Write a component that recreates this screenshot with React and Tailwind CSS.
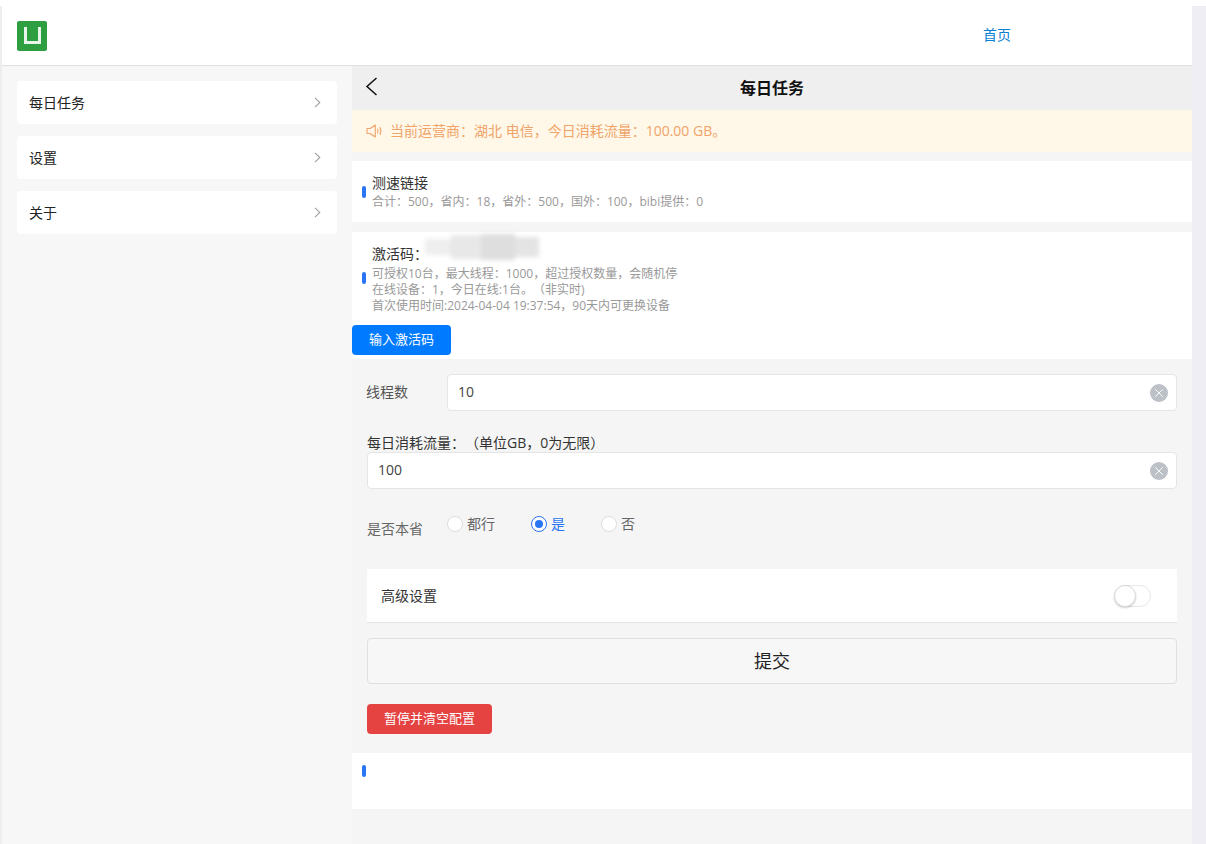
import React from "react";
import { X } from "lucide-react";

function Bar() {
  return <span className="w-1 h-3 rounded-sm bg-[#2a75f3] shrink-0" />;
}

function SideItem({ label }) {
  return (
    <div className="h-[43px] bg-white rounded-sm flex items-center justify-between pl-3 pr-[16px] text-[14px] text-[#222]">
      <span>{label}</span>
      <svg width="7" height="11" viewBox="0 0 7 11" fill="none" stroke="#a0a0a6" strokeWidth="1.1">
        <path d="M1 .8 5.8 5.5 1 10.2" />
      </svg>
    </div>
  );
}

function ClearIcon() {
  return (
    <span className="w-[18px] h-[18px] rounded-full bg-[#bcc0c7] flex items-center justify-center">
      <X className="w-[14px] h-[14px] text-white" strokeWidth={1.6} />
    </span>
  );
}

function Radio({ label, on, cls }) {
  return (
    <div className={"flex items-center gap-1 " + cls}>
      {on ? (
        <span className="w-4 h-4 rounded-full border border-[#2a75f3] bg-white flex items-center justify-center">
          <span className="w-2 h-2 rounded-full bg-[#2a75f3]" />
        </span>
      ) : (
        <span className="w-4 h-4 rounded-full border border-[#ddd] bg-white" />
      )}
      <span className={on ? "text-[#2a75f3] pb-[2px]" : "text-[#666] pb-[2px]"}>{label}</span>
    </div>
  );
}

export default function App() {
  return (
    <div className="w-[1206px] h-[844px] overflow-hidden bg-white flex flex-col [text-spacing-trim:space-all] font-['Open_Sans','Noto_Sans_CJK_SC',sans-serif]">
      <div className="h-[6px] shrink-0 bg-white" />
      <div className="flex flex-1 min-h-0">
        <div className="w-[2px] bg-[#eeeeee] shrink-0" />
        <div className="w-[1190px] flex flex-col shrink-0">
          <header className="h-[60px] shrink-0 bg-white border-b border-[#dfdfdf] flex items-center pl-[15px]">
            <div className="w-[30px] h-[30px] rounded-[2px] bg-[#2d9f40] flex items-center justify-center">
              <span className="w-[17px] h-[17px] border-x-[3px] border-b-[3px] border-[#e8f5ea] block" />
            </div>
            <span className="ml-[936px] text-[14px] text-[#0a7fd6] pb-[2px]">首页</span>
          </header>
          <div className="flex flex-1 min-h-0">
            <aside className="w-[350px] shrink-0 bg-[#f7f7f7] pt-[15px] pl-[15px] pr-[15px] flex flex-col gap-3">
              <SideItem label="每日任务" />
              <SideItem label="设置" />
              <SideItem label="关于" />
            </aside>
            <main className="flex-1 bg-[#f5f5f5] flex flex-col">
              <div className="h-[44px] bg-[#efefef] flex items-center relative shrink-0">
                <svg className="absolute left-[13px] top-[11px]" width="13" height="19" viewBox="0 0 13 19" fill="none" stroke="#111" strokeWidth="1.5">
                  <path d="M11.5 1 2 9.5l9.5 8.5" />
                </svg>
                <span className="w-full text-center text-[16px] font-bold text-[#111]">每日任务</span>
              </div>
              <div className="h-[42px] bg-[#fff7e8] flex items-center pl-[14px] gap-[7px] text-[14px] text-[#f0a469] shrink-0">
                <svg width="17" height="14" viewBox="0 0 17 14" fill="none" stroke="#f0a469" strokeWidth="1.1" strokeLinejoin="round" strokeLinecap="round">
                  <path d="M1 4.5h3.2L9.3 1v12L4.2 9.5H1z" />
                  <path d="M11.5 5c.6 1.2.6 2.8 0 4" />
                  <path d="M14 3.5c1.1 2.2 1.1 4.8 0 7" />
                </svg>
                <span className="pb-[2px]">当前运营商：湖北 电信，今日消耗流量：100.00 GB。</span>
              </div>
              <div className="mt-[9px] h-[61px] bg-white flex items-center pl-[10px] gap-[6px] shrink-0">
                <Bar />
                <div className="flex flex-col pt-[2px]">
                  <span className="text-[14px] leading-[18px] text-[#333]">测速链接</span>
                  <span className="text-[12px] leading-[20px] text-[#999]">合计：500，省内：18，省外：500，国外：100，bibi提供：0</span>
                </div>
              </div>
              <div className="mt-[10px] h-[127px] bg-white flex flex-col shrink-0">
                <div className="flex items-center pl-[10px] gap-[6px] pt-[10px]">
                  <Bar />
                  <div className="flex flex-col">
                    <div className="h-[24px] pb-[2px] flex items-center text-[14px] text-[#333]">
                      <span>激活码：</span>
                      <div className="flex items-center blur-[2px] -mt-[12px] -ml-[3px]">
                        <span className="w-[26px] h-[16px] bg-[#eeeeee]" />
                        <span className="w-[30px] h-[24px] bg-[#e8e8e8]" />
                        <span className="w-[34px] h-[26px] bg-[#dedede]" />
                        <span className="w-[24px] h-[20px] bg-[#e4e4e4]" />
                      </div>
                    </div>
                    <span className="text-[12px] leading-4 text-[#999]">可授权10台，最大线程：1000，超过授权数量，会随机停</span>
                    <span className="text-[12px] leading-4 text-[#999]">在线设备：1，今日在线:1台。（非实时)</span>
                    <span className="text-[12px] leading-4 text-[#999]">首次使用时间:2024-04-04 19:37:54，90天内可更换设备</span>
                  </div>
                </div>
                <button className="mt-[11px] w-[99px] h-[30px] rounded-[4px] bg-[#007bff] text-white text-[13px]">输入激活码</button>
              </div>
              <div className="pl-[15px] pr-[15px] flex flex-col">
                <div className="mt-[15px] flex items-center h-[37px]">
                  <span className="w-[80px] -ml-px mr-px text-[14px] text-[#555] shrink-0 pb-[2px]">线程数</span>
                  <div className="flex-1 h-[37px] bg-white border border-[#e5e5e5] rounded-[4px] flex items-center justify-between pl-[10px] pr-[8px] text-[14px] text-[#444]">
                    <span className="pb-[2px]">10</span>
                    <ClearIcon />
                  </div>
                </div>
                <span className="mt-[23px] h-[18px] leading-[18px] text-[14px] text-[#333]">每日消耗流量：（单位GB，0为无限）</span>
                <div className="h-[37px] bg-white border border-[#e5e5e5] rounded-[4px] flex items-center justify-between pl-[10px] pr-[8px] text-[14px] text-[#444]">
                  <span className="pb-[2px]">100</span>
                  <ClearIcon />
                </div>
                <div className="mt-[23px] h-[24px] flex items-center text-[14px]">
                  <span className="w-[80px] text-[#666] shrink-0 pt-[8px]">是否本省</span>
                  <Radio label="都行" cls="w-[84px]" />
                  <Radio label="是" on cls="w-[70px]" />
                  <Radio label="否" cls="w-[50px]" />
                </div>
                <div className="mt-[33px] h-[54px] bg-white border-b border-[#e4e4e4] flex items-center justify-between pl-[14px] pr-[26px] text-[14px] text-[#333]">
                  <span>高级设置</span>
                  <span className="w-[37px] h-[22px] rounded-full bg-white border border-[#e8e8e8] relative block">
                    <span className="absolute -left-px -top-px w-[22px] h-[22px] rounded-full bg-white border border-[#ddd] shadow-[0_1px_2px_rgba(0,0,0,0.2)]" />
                  </span>
                </div>
                <button className="mt-[15px] h-[46px] pt-px bg-[#f7f7f7] border border-[#e0e0e0] rounded-[4px] text-[18px] text-[#222]">提交</button>
                <button className="mt-[20px] w-[125px] h-[30px] bg-[#e54242] rounded-[4px] text-white text-[13px]">暂停并清空配置</button>
              </div>
              <div className="mt-[19px] h-[56px] bg-white pl-[10px] pt-[12px] shrink-0">
                <span className="block w-1 h-3 rounded-sm bg-[#2a75f3]" />
              </div>
            </main>
          </div>
        </div>
        <div className="w-[14px] bg-[#eeeef4] shrink-0" />
      </div>
    </div>
  );
}
